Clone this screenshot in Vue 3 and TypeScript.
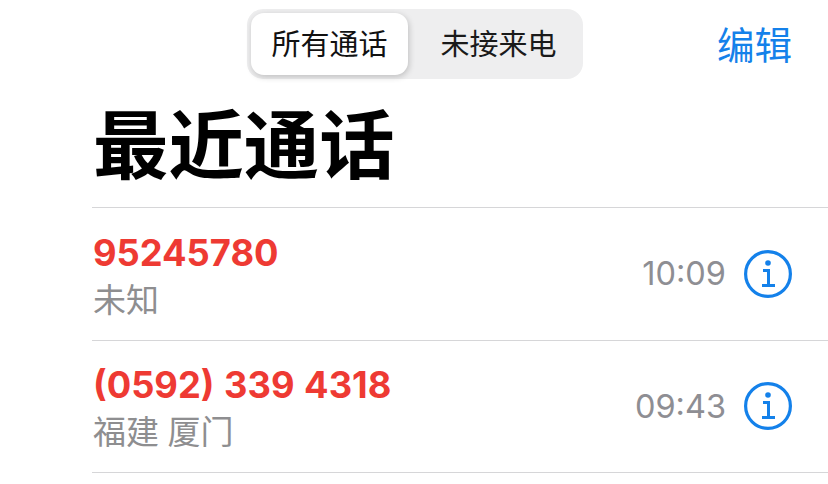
<script setup lang="ts">
interface Call { name: string; place: string; time: string }
const calls: Call[] = [
  { name: '95245780', place: '未知', time: '10:09' },
  { name: '(0592) 339 4318', place: '福建 厦门', time: '09:43' },
]
</script>

<template>
  <div class="page">
    <div class="nav">
      <div class="segments">
        <div class="seg active">所有通话</div>
        <div class="seg second">未接来电</div>
      </div>
      <div class="edit">编辑</div>
    </div>
    <h1 class="title">最近通话</h1>
    <div class="list">
      <div v-for="c in calls" :key="c.name" class="row">
        <div class="who">
          <div class="name">{{ c.name }}</div>
          <div class="place">{{ c.place }}</div>
        </div>
        <div class="time">{{ c.time }}</div>
        <svg class="info" viewBox="0 0 48 48" width="48" height="48" fill="none">
          <circle cx="24" cy="24" r="22.4" stroke="#1481ea" stroke-width="3.2" />
          <circle cx="24" cy="13" r="2.8" fill="#1481ea" />
          <path d="M19 20.5h5.5v15M18 35.5h13" stroke="#1481ea" stroke-width="3" />
        </svg>
      </div>
    </div>
  </div>
</template>

<style>
html, body { margin: 0; background: #fff; }
</style>

<style scoped>
.page {
  width: 828px;
  height: 484px;
  overflow: hidden;
  background: #fff;
  font-family: "Liberation Sans", "Noto Sans CJK SC", sans-serif;
}
.nav {
  height: 87px;
  padding: 9px 36px 0 247px;
  box-sizing: border-box;
  display: flex;
  justify-content: space-between;
  align-items: flex-start;
}
.segments {
  width: 336px;
  height: 70px;
  box-sizing: border-box;
  padding: 4px;
  border-radius: 16px;
  background: #eeeeef;
  display: flex;
}
.seg {
  text-align: center;
  font-size: 29px;
  line-height: 59px;
  color: #1a1a1a;
  font-family: "Noto Sans CJK SC", sans-serif;
}
.seg.active {
  width: 157px;
  height: 62px;
  margin-right: 10px;
  background: #fff;
  border-radius: 13px;
  box-shadow: 1px 2px 6px rgba(0, 0, 0, 0.2);
  color: #111;
}
.seg.second { flex: 1; }
.edit {
  font-size: 37.5px;
  line-height: 67px;
  color: #1481ea;
  font-family: "Noto Sans CJK SC", sans-serif;
}
.title {
  margin: 0;
  padding-left: 93px;
  height: 120px;
  box-sizing: border-box;
  font-size: 75.4px;
  line-height: 108px;
  font-weight: 700;
  color: #000;
  font-family: "Noto Sans CJK SC", sans-serif;
}
.list { margin-left: 92px; border-top: 1px solid #d6d6d8; }
.row {
  height: 132.5px;
  box-sizing: border-box;
  border-bottom: 1px solid #d6d6d8;
  display: flex;
  align-items: center;
  padding-right: 36px;
}
.who { flex: 1; padding: 3px 0 0 1px; }
.name {
  font-size: 36.3px;
  line-height: 46px;
  font-weight: 700;
  word-spacing: 1px;
  color: #ee3a33;
  font-family: "Inter", "Liberation Sans", sans-serif;
}
.place {
  font-size: 33px;
  line-height: 45px;
  word-spacing: 1px;
  color: #8e8e90;
  font-family: "Noto Sans CJK SC", sans-serif;
}
.time {
  font-size: 32.5px;
  color: #8e8e93;
  margin-right: 18px;
  font-family: "Inter", "Liberation Sans", sans-serif;
}
.info { flex: none; }
</style>
